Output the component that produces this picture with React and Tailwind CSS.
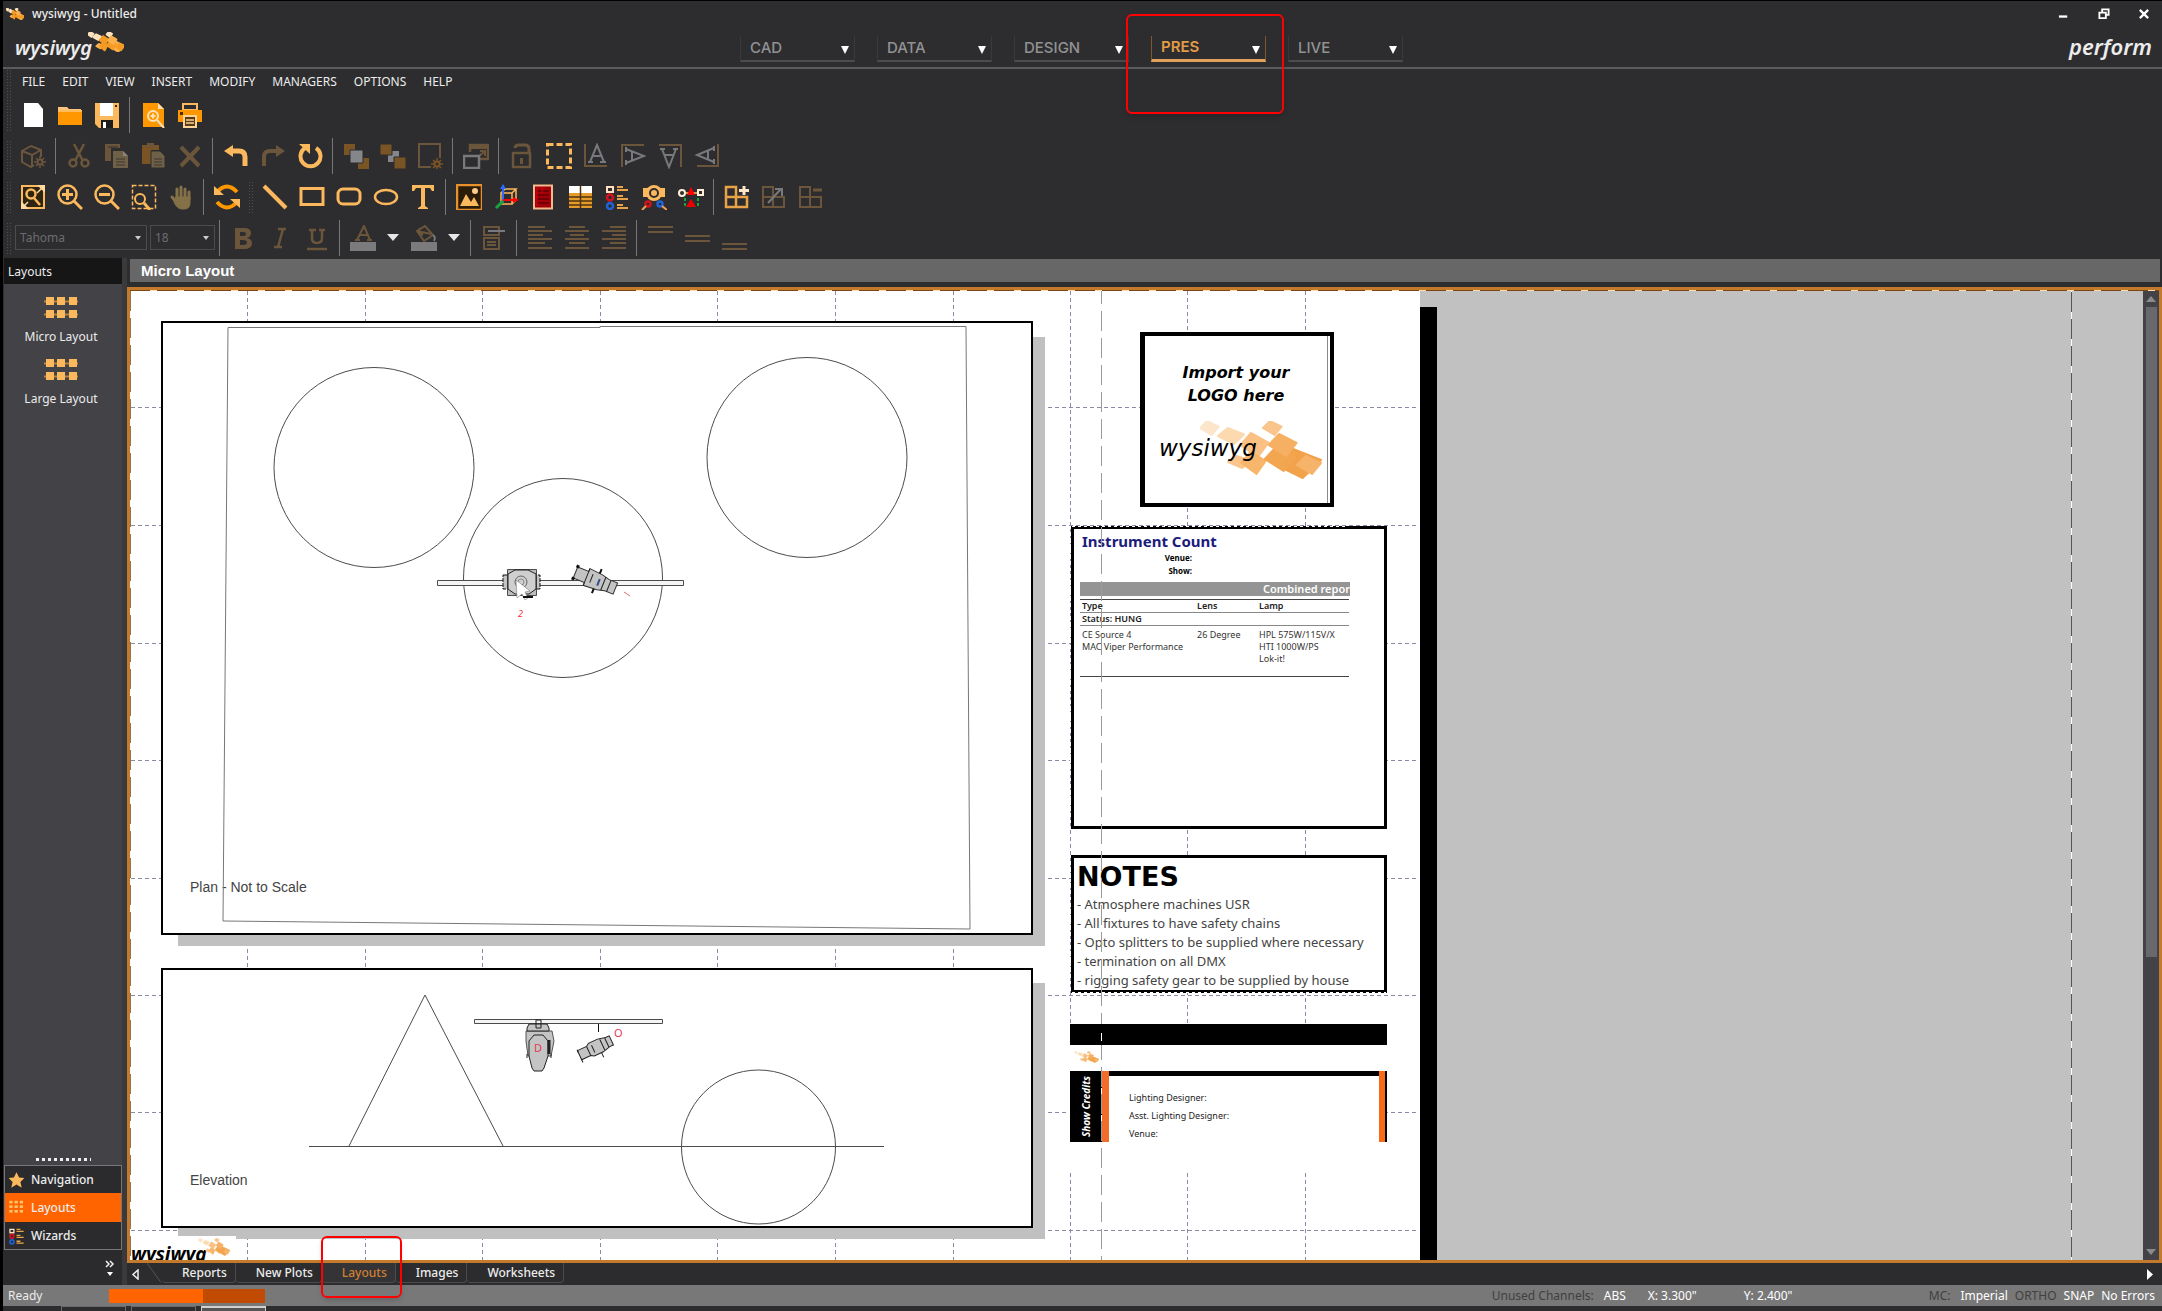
import React from "react";

const A = "#fbb85c";
const O = "#ff9800";
const D = "#6b563c";
const DO = "#7a5424";
const G = "#77797c";

const Svg = ({ children, size = 26 }) => (
  <svg width={size} height={size} viewBox="0 0 26 26" fill="none" aria-hidden="true">
    {children}
  </svg>
);

const icons = {
  new: <path d="M4 1h14l5 6v18H4z" fill="#fff" />,
  folder: (
    <>
      <path d="M1 5h9l2 2h12v4H1z" fill="#fcc47a" />
      <path d="M1 8h24v15H1z" fill={O} />
      <path d="M1 9h24" stroke="#fde0b4" />
    </>
  ),
  save: (
    <>
      <path d="M1 1h24v25H5l-4-4z" fill={A} />
      <path d="M6 1h13v13H6z" fill="#fff" />
      <path d="M7 18h12v8H7z" fill="#1c1c1c" />
      <path d="M9 20h3v6H9z" fill="#fff" />
      <path d="M21 3h2v2h-2z" fill="#3a2a10" />
    </>
  ),
  preview: (
    <>
      <path d="M3 1h15l6 6v18H3z" fill={O} />
      <path d="M18 1v6h6z" fill="#fde0b4" />
      <circle cx="13" cy="14" r="5" stroke="#ffe2b8" strokeWidth="2" />
      <path d="M17 18l7 8M13 11.500v5M10.500 14h5" stroke="#ffe2b8" strokeWidth="2" />
    </>
  ),
  print: (
    <>
      <path d="M6 2h14v6H6z" stroke={A} strokeWidth="2" />
      <path d="M1 8h24v12H1z" fill={O} />
      <path d="M3 10h3v3H3z" fill="#4a3010" />
      <path d="M7 14h12v11H7z" fill="#5a3a10" stroke="#fcd49a" strokeWidth="2" />
      <path d="M9 18h8M9 21h8" stroke="#fcd49a" strokeWidth="1.500" />
    </>
  ),
  cube: (
    <g stroke={D} strokeWidth="2">
      <path d="M14 22l-3 2-9-5V8l9-5 10 4v7M2 8l10 4 9-5M12 12v12" />
      <circle cx="20" cy="19" r="2.500" />
      <path d="M20 13v3M20 22v3M14 19h3M23 19h3M16 15l2 2M22 21l2 2M24 15l-2 2M18 21l-2 2" strokeWidth="1.500" />
    </g>
  ),
  cut: (
    <g stroke={D} strokeWidth="2.500">
      <path d="M8 1l9 17M18 1L9 18" />
      <circle cx="7" cy="20" r="3.500" />
      <circle cx="19" cy="20" r="3.500" />
    </g>
  ),
  copy: (
    <>
      <path d="M2 1h15v4H8v13H2z" fill={D} />
      <path d="M5 4h10" stroke="#2d2d2f" />
      <path d="M10 8h10l5 5v12H10z" fill="#6f6148" />
      <path d="M20 8v5h5z" fill="#8b8478" />
      <path d="M13 16h9M13 19h9M13 22h9" stroke="#3b3631" />
    </>
  ),
  paste: (
    <>
      <path d="M2 2h17v5h-8v14H2z" fill={DO} />
      <path d="M7 0h7v4H7z" fill={D} />
      <path d="M11 8h9l5 5v12H11z" fill="#6f6148" stroke="#2d2d2f" />
      <path d="M14 16h8M14 19h8M14 22h8" stroke="#3b3631" />
    </>
  ),
  del: <path d="M4 4l18 19M22 4L4 23" stroke={D} strokeWidth="4" />,
  undo: (
    <>
      <path d="M1 8l9-6v12z" fill={A} />
      <path d="M8 8h8q6 0 6 6v9" stroke={A} strokeWidth="5" />
    </>
  ),
  redo: (
    <>
      <path d="M25 8l-9-6v12z" fill={D} />
      <path d="M18 8h-8q-6 0-6 6v9" stroke={D} strokeWidth="4" />
    </>
  ),
  rotate: (
    <>
      <path d="M19 5a10 10 0 1 1-11 0" stroke={A} strokeWidth="4" />
      <path d="M2 1h11v10z" fill={A} />
    </>
  ),
  front: (
    <>
      <path d="M1 1h11v11H1zM15 15h11v11H15z" fill={DO} />
      <path d="M7 7h13v13H7z" fill="#85868a" stroke="#2d2d2f" />
    </>
  ),
  back: (
    <>
      <path d="M8 8h11v11H8z" fill="#85868a" />
      <path d="M0 1h12v11H0zM14 14h12v12H14z" fill={DO} stroke="#2d2d2f" />
    </>
  ),
  pageGear: (
    <>
      <path d="M14 24H2V1h21v14" stroke={D} strokeWidth="2" />
      <circle cx="20" cy="21" r="2.500" stroke={DO} strokeWidth="2" />
      <path d="M20 15v3M20 24v2M14 21h3M23 21h3M16 17l2 2M22 23l2 2M24 17l-2 2M18 23l-2 2" stroke={DO} strokeWidth="1.500" />
    </>
  ),
  group: (
    <>
      <path d="M7 9V2h18v14h-8" stroke={D} strokeWidth="2.500" />
      <path d="M7 4h18" stroke={D} strokeWidth="4" />
      <path d="M15 14l7-6M17 8h5v5" stroke={D} strokeWidth="2" />
      <path d="M1 13h15v12H1z" stroke={G} strokeWidth="2.500" />
    </>
  ),
  lock: (
    <>
      <path d="M6 5q0-3 4-3h6q4 0 4 4v5" stroke={D} strokeWidth="3" />
      <path d="M4 10h17v14H4z" stroke={D} strokeWidth="2.500" />
      <path d="M12.500 15v6" stroke={D} strokeWidth="3" />
    </>
  ),
  marquee: <path d="M1.500 1.500h23v23h-23z" stroke={A} strokeWidth="3" strokeDasharray="6 3" />,
  flipA: (
    <>
      <path d="M2 1v22h22" stroke={D} strokeWidth="2" />
      <path d="M7 19l7-17 7 17M9 13h9M5 19h5M17 19h6" stroke={G} strokeWidth="2" />
    </>
  ),
  flipB: (
    <>
      <path d="M24 2H2v22" stroke={D} strokeWidth="2" />
      <path d="M6 6l18 7-18 7M12 8v10M6 4v5M6 17v5" stroke={G} strokeWidth="2" />
    </>
  ),
  flipC: (
    <>
      <path d="M2 2h22v22" stroke={D} strokeWidth="2" />
      <path d="M5 6l7 18 7-18M7 12h10M3 6h5M16 6h5" stroke={G} strokeWidth="2" />
    </>
  ),
  flipD: (
    <>
      <path d="M24 1v22H3" stroke={D} strokeWidth="2" />
      <path d="M20 5L3 12l17 7M14 7v10M20 3v5M20 16v5" stroke={G} strokeWidth="2" />
    </>
  ),
  fit: (
    <>
      <path d="M2 2h22v22H2z" fill="#2d2412" stroke={A} strokeWidth="2" />
      <path d="M17 1h8v8z" fill="#ffd9a0" />
      <path d="M1 17v8h8z" fill="#ffd9a0" />
      <path d="M17 9l6-6M3 23l5-5" stroke="#ffd9a0" strokeWidth="1.500" />
      <circle cx="11" cy="10" r="4.500" stroke={A} strokeWidth="2.500" />
      <path d="M14 14l6 7" stroke={A} strokeWidth="2.500" />
    </>
  ),
  zoomIn: (
    <g stroke={A}>
      <circle cx="10.500" cy="10.500" r="9" strokeWidth="2.500" />
      <path d="M17 17l8 8M10.500 5v11M5 10.500h11" strokeWidth="3" />
    </g>
  ),
  zoomOut: (
    <g stroke={A}>
      <circle cx="10.500" cy="10.500" r="9" strokeWidth="2.500" />
      <path d="M17 17l8 8M5 10.500h11" strokeWidth="3" />
    </g>
  ),
  zoomWin: (
    <>
      <path d="M1.500 1.500h23v23h-23z" stroke={A} strokeWidth="1.500" strokeDasharray="4 2" />
      <circle cx="9" cy="15" r="5" fill="#2d2d2f" stroke={A} strokeWidth="2" />
      <path d="M13 19l6 7" stroke={A} strokeWidth="3" />
    </>
  ),
  hand: (
    <g stroke="#857148" strokeLinecap="round" strokeWidth="3">
      <path d="M9 14V5M13 14V3M17 14V5M21 15V8M4 13l5 6" />
      <path d="M8 13h14v6q0 6-6 6h-2q-5 0-8-7z" fill="#857148" strokeWidth="1" />
    </g>
  ),
  refresh: (
    <>
      <path d="M3 8q10-11 20 0M23 18q-10 11-20 0" stroke={O} strokeWidth="4" />
      <path d="M0 2v9h10zM26 24v-9H16z" fill={A} />
    </>
  ),
  line: <path d="M2 2l22 22" stroke={A} strokeWidth="4" />,
  rect: <path d="M2 4.500h22v16H2z" stroke={A} strokeWidth="3" />,
  rrect: <rect x="2" y="5" width="22" height="15" rx="5" stroke={A} strokeWidth="3" />,
  ellipse: <ellipse cx="13" cy="13" rx="11" ry="7" stroke={A} strokeWidth="2.500" />,
  text: <path d="M2 1h22v6h-2l-2-3h-5v18l3 2v1H8v-1l3-2V4H6L4 7H2z" fill={A} />,
  image: (
    <>
      <path d="M1 1h25v25H1z" fill="#2b1c08" stroke="#e8912c" strokeWidth="2.500" />
      <path d="M4 22l6-12 5 8 3-5 5 9z" fill={A} />
      <circle cx="19" cy="7" r="3" fill="#ffc987" />
    </>
  ),
  axes: (
    <>
      <path d="M8 9h11v11H8zM8 9l4-4h11l-4 4M19 20l4-4V5" stroke={A} strokeWidth="1.500" />
      <path d="M10 18V2" stroke="#2b6bff" strokeWidth="2" />
      <path d="M7 5l3-5 3 5z" fill="#2b6bff" />
      <path d="M10 16h12" stroke="#f00" strokeWidth="2" />
      <path d="M20 13l6 3-6 3z" fill="#f00" />
      <path d="M10 17l-7 7" stroke="#17a53a" strokeWidth="3" />
    </>
  ),
  report: (
    <>
      <path d="M4 1.500h18v23H4z" fill="#a30008" stroke="#f4b98c" strokeWidth="2" />
      <path d="M7 7h12M7 11h12M7 15h12M7 19h12" stroke="#3d0004" />
      <path d="M7 4v18M12 3v6" stroke="#e00010" />
    </>
  ),
  table: (
    <>
      <path d="M2 2h23v22H2z" fill="#e59a2c" />
      <path d="M2 2h23v7H2z" fill="#fff" />
      <path d="M13.500 2v22M2 13h23M2 17h23M2 21h23" stroke="#4d340c" strokeWidth="1.500" />
    </>
  ),
  legend: (
    <>
      <path d="M3 3h6v5H3z" stroke="#ffe0c0" strokeWidth="2" />
      <circle cx="6" cy="13.500" r="3" stroke="#d3121e" strokeWidth="2.500" />
      <circle cx="6" cy="22" r="3" stroke="#1e63d8" strokeWidth="2.500" />
      <path d="M13 3h6M13 6h11M13 12h6M13 15h11M13 21h6M13 24h11" stroke="#e8a347" strokeWidth="2" />
    </>
  ),
  fixture: (
    <>
      <path d="M2 4h22v9H2z" fill={A} />
      <circle cx="13" cy="9" r="8" fill={A} />
      <circle cx="13" cy="9" r="4" fill={A} stroke="#2d2d2f" strokeWidth="2" />
      <circle cx="7" cy="20" r="2.500" stroke="#d3121e" strokeWidth="2.500" />
      <circle cx="19" cy="20" r="2.500" stroke="#1e63d8" strokeWidth="2.500" />
      <path d="M5 22l-4 4M21 22l5 4" stroke="#f0a050" strokeWidth="2" />
    </>
  ),
  cable: (
    <>
      <path d="M7 9h12" stroke={A} strokeWidth="1.500" />
      <circle cx="4" cy="9" r="3" stroke="#fff0da" strokeWidth="2" />
      <path d="M20 6h5v5h-5z" stroke="#fff0da" strokeWidth="2" />
      <path d="M13 3l4 8H9z" fill="#f00" />
      <path d="M13 15l5 8H8z" fill="#e00" />
      <path d="M7 14v9M20 14v9" stroke="#17a53a" strokeWidth="2" strokeDasharray="3 2" />
    </>
  ),
  gridAdd: (
    <>
      <path d="M2 3h10v10H2zM2 13h10v10H2zM12 13h11v10H12z" stroke="#e8a347" strokeWidth="2.500" />
      <path d="M20 2v9M15 6.500h10" stroke="#ffe6c8" strokeWidth="3" />
    </>
  ),
  gridScale: (
    <>
      <path d="M2 3h10v10H2zM2 13h10v10H2zM12 13h11v10H12z" stroke={D} strokeWidth="2" />
      <path d="M7 19L20 5M14 5h7v7" stroke={G} strokeWidth="2" />
    </>
  ),
  gridRemove: (
    <>
      <path d="M2 3h10v10H2zM2 13h10v10H2zM12 13h11v10H12z" stroke={D} strokeWidth="2" />
      <path d="M15 6h9" stroke={D} strokeWidth="3" />
    </>
  ),
  bold: <path d="M5 3h9q7 0 7 5 0 4-4 5 5 1 5 5 0 6-8 6H5zM10 7v4h3q3 0 3-2t-3-2zM10 15v5h3q4 0 4-2.500T13 15z" fill={D} fillRule="evenodd" />,
  italic: <path d="M11 4h8M16 4l-5 18M7 22h8" stroke={D} strokeWidth="2.500" />,
  underline: (
    <>
      <path d="M5 5h7M15 5h6M8 5v8q0 5 5 5t5-5V5" stroke={D} strokeWidth="2.500" />
      <path d="M3 24h20" stroke={D} strokeWidth="2.500" />
    </>
  ),
  fontColor: (
    <>
      <path d="M7 15L14 1l6 14M10 10h8M5 15h5M17 15h5" stroke={D} strokeWidth="2" />
      <path d="M0 17h26v10H0z" fill="#7b7b7d" />
    </>
  ),
  fill: (
    <>
      <path d="M6 6l8-5 8 9-9 6zM9 3q-3 4 3 7M6 6l14 3" stroke={D} strokeWidth="2" />
      <path d="M22 10q3 2 1 6" stroke={G} strokeWidth="2" />
      <path d="M0 17h26v10H0z" fill="#7b7b7d" />
    </>
  ),
  props: (
    <g stroke={D} strokeWidth="2">
      <path d="M3 2h15v8H3zM3 13h15v11H3zM6 17h9M6 20h9" />
      <path d="M7 6h17" stroke={G} />
    </g>
  ),
  left: <path d="M1 2h17M1 6h24M1 10h15M1 14h24M1 18h17M1 23h24" stroke={D} strokeWidth="2" />,
  center: <path d="M5 2h16M1 6h24M6 10h14M1 14h24M5 18h16M1 23h24" stroke={D} strokeWidth="2" />,
  right: <path d="M9 2h16M1 6h24M11 10h14M1 14h24M9 18h16M1 23h24" stroke={D} strokeWidth="2" />,
  top: <path d="M1 2h25M1 7h25" stroke={D} strokeWidth="2" />,
  middle: <path d="M1 11h25M1 16h25" stroke={D} strokeWidth="2" />,
  bottom: <path d="M1 19h25M1 24h25" stroke={D} strokeWidth="2" />,
};

const Grip = () => (
  <span className="ml-[3px] mr-[2px] h-8 w-[6px] shrink-0 bg-[radial-gradient(#505053_1px,transparent_1px)] bg-[size:3px_3px]" />
);
const Sep = () => (
  <span className="flex w-[9px] shrink-0 justify-center">
    <span className="h-9 w-px bg-[#77777a]" />
  </span>
);
const Tool = ({ name, label }) => (
  <button type="button" aria-label={label || name} className="flex h-9 w-[37px] shrink-0 items-center justify-center">
    <Svg>{icons[name]}</Svg>
  </button>
);
const Drop = ({ label }) => (
  <button type="button" aria-label={label} className="flex h-9 w-6 shrink-0 items-center justify-center">
    <span className="border-x-[6px] border-t-[7px] border-x-transparent border-t-[#e6e6e6]" />
  </button>
);

const Toolbar = ({ items }) => (
  <div className="flex h-[41px] items-center" role="toolbar">
    <Grip />
    {items.map((it, i) => (it === "|" ? <Sep key={i} /> : it === ":" ? <Grip key={i} /> : <Tool key={i} name={it} />))}
  </div>
);

const diamonds = [
  [10, 7, 10, 7, "#fbe6cc"],
  [33, 15, 14, 8, "#fcd9ae"],
  [77, 7, 10, 7, "#f9c58c"],
  [58, 24, 15, 12, "#fbc184"],
  [42, 41, 12, 6, "#fbc58c"],
  [57, 42, 13, 11, "#f8b56c"],
  [103, 42, 26, 15, "#f2a24a"],
  [85, 38, 16, 12, "#f3a650"],
  [88, 24, 15, 11, "#f5b063"],
  [116, 44, 13, 9, "#f6b36a"],
];
const Flame = ({ className, vivid }) => (
  <svg className={className} viewBox="0 0 130 58" preserveAspectRatio="none" aria-hidden="true">
    {diamonds.map(([x, y, w, h, c], i) => {
      const fill = vivid ? (i < 3 ? "#fde3bd" : i % 2 ? "#f59a22" : "#fbb04e") : c;
      return (
        <path
          key={i}
          d={`M${x - w} ${y}L${x - w / 4} ${y - h}L${x + w} ${y - h / 5}L${x + w / 4} ${y + h}Z`}
          fill={fill}
          stroke={fill}
          strokeWidth={vivid ? 6 : 2}
          strokeLinejoin="round"
        />
      );
    })}
  </svg>
);

const modes = ["CAD", "DATA", "DESIGN", "PRES", "LIVE"];

const ModeTab = ({ name }) => {
  const on = name === "PRES";
  return (
    <div className="relative">
      <button
        type="button"
        className={
          "flex h-[26px] w-[115px] items-center justify-between border-x border-x-[#3a3a3c] pl-[9px] pr-[5px] font-['Inter',sans-serif] text-[15px] " +
          (on
            ? "border-b-[3px] border-x-[#80582c] border-b-[#e0a258] font-semibold text-[#e39b45]"
            : "border-b-2 border-b-[#4c4c4e] font-medium text-[#929294]")
        }
      >
        {name}
        <span className="mt-1 border-x-4 border-t-8 border-x-transparent border-t-white" />
      </button>
      {on && <span className="pointer-events-none absolute -left-[25px] -top-[22px] z-20 h-[100px] w-[158px] rounded-md border-2 border-[#f00] shadow-md" />}
    </div>
  );
};

const LayoutIcon = () => (
  <svg width="34" height="22" viewBox="0 0 34 22" aria-hidden="true">
    <path d="M0 4.500h34M0 17.500h34" stroke="#b98440" strokeWidth="2" />
    {[2, 13, 25].map((x) => [0, 13].map((y) => <rect key={x + "-" + y} x={x} y={y} width="8" height="8" fill={A} />))}
  </svg>
);

const Sidebar = () => (
  <aside className="flex w-[118px] shrink-0 flex-col">
    <h2 className="h-[26px] bg-[#161617] pl-1 text-[12px] leading-7">Layouts</h2>
    <div className="flex grow flex-col items-center bg-[#434247] pr-1 pt-[13px]">
      {["Micro Layout", "Large Layout"].map((t) => (
        <button key={t} type="button" className="flex h-[62px] flex-col items-center gap-2 text-[12px]">
          <LayoutIcon />
          <span className="leading-5">{t}</span>
        </button>
      ))}
    </div>
    <div className="flex h-3 items-center justify-center bg-[#434247]">
      <span className="h-[3px] w-[55px] bg-[linear-gradient(90deg,#eee_50%,transparent_50%)] bg-[size:6px_3px]" />
    </div>
    <nav className="flex flex-col border border-[#77777a]">
      {["Navigation", "Layouts", "Wizards"].map((t, i) => (
        <button
          key={t}
          type="button"
          className={"flex items-center gap-[6px] pl-[3px] text-[12px] font-medium " + (i === 1 ? "h-[29px] bg-[#ff6400]" : "h-[27px] bg-[#2b2b2d]")}
        >
          <svg width="17" height="18" viewBox="0 0 26 26" fill="none" aria-hidden="true">
            {i === 0 && <path d="M13 1l4 8 8 1-6 6 2 9-8-5-8 5 2-9-6-6 8-1z" fill={A} />}
            {i === 1 && [2, 10, 18].map((x) => [2, 9, 16].map((y) => <rect key={x + "" + y} x={x} y={y} width="5" height="4" fill="#ffc46e" />))}
            {i === 2 && icons.legend}
          </svg>
          {t}
        </button>
      ))}
    </nav>
    <div className="flex h-[35px] flex-col items-end justify-center gap-1 bg-[#2b2b2d] pr-[7px]">
      <svg width="10" height="8" viewBox="0 0 10 8" fill="none" aria-hidden="true">
        <path d="M1 1l3 3-3 3M5 1l3 3-3 3" stroke="#eee" strokeWidth="1.500" />
      </svg>
      <span className="mr-[2px] border-x-[3px] border-t-4 border-x-transparent border-t-white" />
    </div>
  </aside>
);

const vGrid = [247, 365, 482, 600, 717, 835, 953, 1070, 1187, 1305];
const hGrid = [407, 525, 643, 760, 878, 995, 1112, 1230];

const Drawing = () => (
  <svg className="absolute left-0 top-0 h-[969px] w-[2012px]" viewBox="131 291 2012 969" fill="none" aria-hidden="true">
    <g stroke="#4c4c4c" strokeWidth="1">
      <path d="M228 327.500H600V326.500H966L970 929L223 921Z" stroke="#777" />
      <circle cx="374" cy="467.500" r="100" />
      <circle cx="807" cy="457.500" r="100" />
      <circle cx="563" cy="578" r="99.500" />
      <path d="M437.500 580.500h246v5h-246z" fill="#f4f4f4" />
      <g>
        <path d="M503 575h37v14h-37z" fill="#c4c4c4" stroke="#111" strokeDasharray="4 1" />
        <path d="M507.500 569.500h29v26h-29z" fill="#bdbdbd" />
        <path d="M508 574l7-4h13l8 4v15l-7 5h-14l-7-5z" fill="#cfcfcf" stroke="#222" />
        <circle cx="521" cy="582" r="6" stroke="#666" />
        <circle cx="521" cy="582" r="3" stroke="#888" />
        <path d="M516 580l1 18 5-4 3 6 3-2-3-6 5-1z" fill="#fff" stroke="#666" strokeWidth=".5" />
        <path d="M523 597h10" stroke="#111" strokeWidth="2" />
      </g>
      <g transform="translate(594 580) rotate(22)">
        <path d="M-20-6h12v-3l14 1 8 2h9v12h-9l-8 2-14 1v-3h-12z" fill="#c4c4c4" stroke="#333" />
        <path d="M-8-9v18M-3-5v9M10-7v14M16-6v12" stroke="#222" />
        <path d="M3-8v-5M3 8v5" stroke="#111" strokeWidth="2" />
        <path d="M-20-8v3M-20 5v3" stroke="#111" strokeWidth="3" />
        <path d="M5-3v7" stroke="#35508c" strokeWidth="2" />
      </g>
      <path d="M624 592l6 4" stroke="#e06a6a" />
      <path d="M349 1146L425 995L503 1146" />
      <path d="M309 1146.500H884" />
      <circle cx="758.500" cy="1147" r="77" />
      <path d="M474.500 1019.500h188v4h-188z" fill="#f4f4f4" />
      <g fill="#c4c4c4" stroke="#222">
        <path d="M526 1031h26l2 10-3 15h-23l-2-15z" stroke="#555" />
        <path d="M529 1024h18l2 4v3h-22v-3z" />
        <path d="M536 1020h5v8h-5z" fill="none" />
        <path d="M529 1056v-15l5-6h9l5 6v15l-4 12-2 3h-8l-2-3z" />
        <path d="M527 1058v-4M551 1058v-4" />
        <path d="M549 1040v14" strokeWidth="3" />
      </g>
      <path d="M598.500 1024v8" stroke="#111" />
      <g transform="translate(595 1048) rotate(-25)" fill="#c4c4c4" stroke="#222">
        <path d="M-17-5h10l3-2h10l8 2h4v10h-4l-8 2h-10l-3-2h-10z" />
        <path d="M-7-5v10M-2-4v8M8-6v12M13-5v10M4 7v5M-17-6v3M-17 4v4" />
      </g>
    </g>
  </svg>
);

const Grid = () => (
  <svg className="absolute left-0 top-0 h-[969px] w-[1289px]" viewBox="131 291 1289 969" fill="none" aria-hidden="true">
    <g stroke="#8a8aa6" strokeDasharray="4 3">
      {vGrid.map((x) => (
        <path key={x} d={`M${x + 0.5} 291V1260`} />
      ))}
      {hGrid.map((y) => (
        <path key={y} d={`M131 ${y + 0.5}H1417`} />
      ))}
    </g>
  </svg>
);

const Margins = () => (
  <svg className="absolute left-0 top-0 h-[969px] w-[2012px]" viewBox="131 291 2012 969" fill="none" aria-hidden="true">
    <path d="M1101.500 284V1260" stroke="#9b9b9b" strokeDasharray="20 7" />
    <path d="M1101.500 1024v21" stroke="#000" />
    <path d="M1101.500 1033v8M1101.500 1088v6M1101.500 1115v6" stroke="#fff" />
    <path d="M2071.500 291V1260" stroke="#fff" />
    <path d="M2071.500 292V1260" stroke="#555" strokeDasharray="20 7" />
    <path d="M1070.500 526V829M1070.500 855V993" stroke="#fff" strokeDasharray="3 3" />
    <path d="M1072 526.500H1348M1072 992.500H1386" stroke="#fff" strokeDasharray="3 3" />
  </svg>
);

const notes = [
  "- Atmosphere machines USR",
  "- All fixtures to have safety chains",
  "- Opto splitters to be supplied where necessary",
  "- termination on all DMX",
  "- rigging safety gear to be supplied by house",
];

const Canvas = () => (
  <div className="relative grow overflow-hidden bg-[#c1c1c1] text-black">
    <div className="absolute left-0 top-0 h-full w-[1289px] bg-white" />
    <div className="absolute left-[1289px] top-4 h-full w-[17px] bg-black" />
    <Grid />

    <div className="absolute left-[47px] top-[46px] h-[609px] w-[867px] bg-[#c0c0c0]" />
    <section className="absolute left-[30px] top-[30px] flex h-[614px] w-[872px] items-end border-2 border-black bg-white pb-[38px] pl-[27px]">
      <p className="font-['Liberation_Sans',sans-serif] text-[14px] leading-4 text-[#444]">Plan - Not to Scale</p>
    </section>
    <div className="absolute left-[47px] top-[692px] h-[256px] w-[867px] bg-[#c0c0c0]" />
    <section className="absolute left-[30px] top-[677px] flex h-[260px] w-[872px] items-end border-2 border-black bg-white pb-[38px] pl-[27px]">
      <p className="font-['Liberation_Sans',sans-serif] text-[14px] leading-4 text-[#444]">Elevation</p>
    </section>
    <Drawing />
    <span className="absolute left-[387px] top-[317px] text-[9px] italic leading-3 text-[#e33]">2</span>
    <span className="absolute left-[403px] top-[749px] text-[11px] leading-4 text-[#e23b4e]">D</span>
    <span className="absolute left-[483px] top-[734px] text-[11px] leading-4 text-[#e23b4e]">O</span>

    <section className="absolute left-[1009px] top-[41px] h-[175px] w-[194px] border-4 border-l-[5px] border-black bg-white font-['DejaVu_Sans',sans-serif] italic">
      <div className="mr-[2px] h-full border-r border-[#888] pt-[25px] text-center text-[16px] font-bold leading-[23px]">
        Import your
        <br />
        LOGO here
      </div>
      <Flame className="absolute left-[55px] top-[85px] h-[58px] w-[122px]" />
      <p className="absolute left-[14px] top-[98px] text-[23px] leading-7">wysiwyg</p>
    </section>

    <section className="absolute left-[940px] top-[235px] h-[303px] w-[316px] border-[3px] border-black bg-white pl-[6px] pt-[4px] font-['Noto_Sans',sans-serif]">
      <h3 className="pl-[2px] text-[15px] font-bold leading-[16px] text-[#1c1c7c]">Instrument Count</h3>
      <div className="mt-[2px] w-[112px] text-right text-[8px] font-bold leading-[13px]">
        <p>Venue:</p>
        <p>Show:</p>
      </div>
      <div className="mt-[5px] h-[14px] w-[270px] whitespace-nowrap bg-[#949494] text-right text-[11px] font-semibold leading-[14px] text-white">
        Combined repor
      </div>
      <table className="mt-[3px] w-[269px] table-fixed border-collapse border-y border-[#444] text-left text-[9px] leading-[12px] text-[#333]">
        <colgroup>
          <col className="w-[117px]" />
          <col className="w-[62px]" />
          <col />
        </colgroup>
        <thead>
          <tr className="border-b border-[#888] text-[#222]">
            <th className="pl-[2px] font-semibold">Type</th>
            <th className="font-semibold">Lens</th>
            <th className="font-semibold">Lamp</th>
          </tr>
        </thead>
        <tbody>
          <tr className="border-b border-[#888]">
            <th colSpan="3" className="pl-[2px] font-semibold text-[#222]">
              Status: HUNG
            </th>
          </tr>
          <tr>
            <td className="pl-[2px] pt-[3px]">CE Source 4</td>
            <td className="pt-[3px]">26 Degree</td>
            <td className="pt-[3px]">HPL 575W/115V/X</td>
          </tr>
          <tr>
            <td className="whitespace-nowrap pb-[11px] pl-[2px] align-top">MAC Viper Performance</td>
            <td />
            <td className="pb-[11px]">
              HTI 1000W/PS
              <br />
              Lok-it!
            </td>
          </tr>
        </tbody>
      </table>
    </section>

    <section className="absolute left-[940px] top-[564px] h-[138px] w-[316px] border-[3px] border-black bg-white pl-[3px]">
      <h3 className="pt-[3px] font-['DejaVu_Sans',sans-serif] text-[27px] font-bold leading-[32px]">NOTES</h3>
      <ul className="pt-[2px] font-['Noto_Sans',sans-serif] text-[13px] leading-[19px] text-[#444]">
        {notes.map((n) => (
          <li key={n} className="whitespace-nowrap">
            {n}
          </li>
        ))}
      </ul>
    </section>

    <section className="absolute left-[938px] top-[733px] h-[146px] w-[318px] bg-white pl-px">
      <div className="h-[21px] bg-black" />
      <Flame className="ml-1 mt-[6px] h-[12px] w-[25px]" />
      <div className="mt-2 flex h-[71px]">
        <div className="flex w-8 items-center justify-center bg-black">
          <span className="rotate-180 text-[10px] font-bold italic leading-4 text-white [writing-mode:vertical-rl]">Show Credits</span>
        </div>
        <div className="w-[7px] bg-[#f26c2c]" />
        <div className="grow border-t-[5px] border-black pl-5 pt-[13px] font-['Noto_Sans',sans-serif] text-[9px] leading-[18px] text-[#222]">
          <p>Lighting Designer:</p>
          <p>Asst. Lighting Designer:</p>
          <p>Venue:</p>
        </div>
        <div className="w-2 border-r-2 border-black bg-[#f96a16]" />
      </div>
    </section>
    <Margins />

    <div className="absolute bottom-0 left-0 h-6 w-[105px] overflow-hidden bg-white">
      <p className="pt-[4px] text-[19px] font-bold italic leading-7">wysiwyg</p>
      <Flame className="absolute left-[67px] top-[2px] h-[18px] w-8" />
    </div>
  </div>
);

const sheetTabs = ["Reports", "New Plots", "Layouts", "Images", "Worksheets"];

const SheetTabs = () => (
  <div className="flex h-[22px] items-start bg-[#2c2c2e] text-[12px] font-medium">
    <button type="button" aria-label="Scroll tabs left" className="ml-1 flex h-[22px] w-4 items-center">
      <svg width="9" height="11" viewBox="0 0 9 11" fill="none" aria-hidden="true">
        <path d="M7 1v9L2 5.500z" stroke="#eee" strokeWidth="1.500" />
      </svg>
    </button>
    <svg width="15" height="20" viewBox="0 0 15 20" fill="none" aria-hidden="true" className="shrink-0">
      <path d="M0 0l14 19.500" stroke="#555" />
    </svg>
    <div className="flex" role="tablist">
      {sheetTabs.map((t) => {
        const on = t === "Layouts";
        return (
          <button
            key={t}
            type="button"
            role="tab"
            aria-selected={on}
            className={"relative h-5 rounded-b-[4px] border-b border-r border-[#4c4c4e] pl-5 pr-2 leading-4 " + (on ? "bg-[#343436] text-[#d07f33]" : "")}
          >
            {t}
            {on && <span className="pointer-events-none absolute -left-px -top-[27px] z-20 h-[62px] w-[81px] rounded-md border-2 border-[#f00] shadow-md" />}
          </button>
        );
      })}
    </div>
    <button type="button" aria-label="Scroll tabs right" className="ml-auto flex h-[22px] w-4 items-center">
      <svg width="8" height="11" viewBox="0 0 8 11" aria-hidden="true">
        <path d="M1 0v11l6-5.500z" fill="#fff" />
      </svg>
    </button>
  </div>
);

export default function App() {
  return (
    <div className="flex min-h-screen flex-col border-l-[3px] border-t border-black bg-[#2d2d2f] font-['Noto_Sans',sans-serif] text-[#ececec]">
      <header className="border-b-2 border-[#5c5c5e]">
        <div className="flex h-[25px] items-center justify-between">
          <div className="flex items-center gap-2 pl-[3px] text-[12px]">
            <Flame vivid className="h-3 w-[18px]" />
            <h1 className="font-medium">wysiwyg - Untitled</h1>
          </div>
          <div className="flex items-center pr-[6px]">
            <button type="button" aria-label="Minimize" className="flex w-10 justify-center">
              <Svg size={12}>
                <path d="M2 16h18v5H2z" fill="#fff" />
              </Svg>
            </button>
            <button type="button" aria-label="Restore" className="flex w-10 justify-center">
              <Svg size={12}>
                <path d="M9 8V3h14v12h-5M3 10h14v12H3z" stroke="#fff" strokeWidth="4" />
              </Svg>
            </button>
            <button type="button" aria-label="Close" className="-mr-2 flex w-10 justify-center">
              <Svg size={12}>
                <path d="M4 4l18 18M22 4L4 22" stroke="#fff" strokeWidth="5" />
              </Svg>
            </button>
          </div>
        </div>
        <div className="grid h-[41px] grid-cols-[737px_1fr_auto] items-start">
          <div className="flex pl-3">
            <span className="pt-[8px] text-[20px] font-semibold italic leading-7">wysiwyg</span>
            <Flame vivid className="-ml-1 mt-[6px] h-[20px] w-9" />
          </div>
          <nav className="flex gap-[22px] pt-[10px]">
            {modes.map((m) => (
              <ModeTab key={m} name={m} />
            ))}
          </nav>
          <span className="pr-[10px] pt-[6px] text-[22px] font-semibold italic leading-7">perform</span>
        </div>
      </header>

      <nav className="flex h-[25px] items-center">
        <Grip />
        <div className="flex gap-[17px] pl-2 text-[12px]">
          {["FILE", "EDIT", "VIEW", "INSERT", "MODIFY", "MANAGERS", "OPTIONS", "HELP"].map((m) => (
            <button key={m} type="button">
              {m}
            </button>
          ))}
        </div>
      </nav>
      <Toolbar items={["new", "folder", "save", "|", "preview", "print"]} />
      <Toolbar
        items={["cube", "|", "cut", "copy", "paste", "del", "|", "undo", "redo", "rotate", "|", "front", "back", "pageGear", "|", "group", "|", "lock", "marquee", "flipA", "flipB", "flipC", "flipD"]}
      />
      <Toolbar
        items={["fit", "zoomIn", "zoomOut", "zoomWin", "hand", "|", "refresh", ":", "line", "rect", "rrect", "ellipse", "text", "|", "image", "axes", "report", "table", "legend", "fixture", "cable", "|", "gridAdd", "gridScale", "gridRemove"]}
      />
      <div className="flex h-[41px] items-center" role="toolbar">
        <Grip />
        <div className="relative ml-px mr-[3px] flex items-center">
          <select aria-label="Font" className="h-[25px] w-[132px] appearance-none border border-[#4c4c4f] bg-transparent pl-1 text-[12px] text-[#6c6c6f]" defaultValue="Tahoma">
            <option>Tahoma</option>
          </select>
          <span className="pointer-events-none absolute right-[6px] border-x-[3px] border-t-4 border-x-transparent border-t-[#ccc]" />
        </div>
        <div className="relative flex items-center">
          <select aria-label="Font size" className="h-[25px] w-[65px] appearance-none border border-[#4c4c4f] bg-transparent pl-1 text-[12px] text-[#6c6c6f]" defaultValue="18">
            <option>18</option>
          </select>
          <span className="pointer-events-none absolute right-[6px] border-x-[3px] border-t-4 border-x-transparent border-t-[#ccc]" />
        </div>
        <Sep />
        <Tool name="bold" />
        <Tool name="italic" />
        <Tool name="underline" />
        <Sep />
        <Tool name="fontColor" label="Font color" />
        <Drop label="Font color options" />
        <Tool name="fill" label="Fill color" />
        <Drop label="Fill color options" />
        <Sep />
        <Tool name="props" />
        <Sep />
        <Tool name="left" />
        <Tool name="center" />
        <Tool name="right" />
        <Sep />
        <Tool name="top" />
        <Tool name="middle" />
        <Tool name="bottom" />
      </div>

      <div className="flex grow pl-px">
        <Sidebar />
        <main className="flex min-w-0 grow flex-col border-l-[5px] border-[#3a3a3d] pt-px">
          <h2 className="mb-[5px] ml-[3px] mr-[2px] h-[23px] bg-[#676767] pl-[11px] font-['Liberation_Sans',sans-serif] text-[15px] font-bold leading-[23px] text-white">
            Micro Layout
          </h2>
          <div className="flex grow flex-col border-[3px] border-[#c47a2c]">
            <div className="h-px bg-[repeating-linear-gradient(90deg,#7d4610_0_20px,#ffe2b0_20px_27px)]" />
            <div className="flex grow">
              <div className="w-px bg-[repeating-linear-gradient(180deg,#94734e_0_20px,#fff_20px_27px)]" />
              <Canvas />
              <div className="flex w-4 flex-col items-center bg-[#434247]">
                <span className="my-[5px] border-x-[5px] border-b-[6px] border-x-transparent border-b-[#8b8b8e]" />
                <span className="h-[650px] w-[11px] bg-[#69686d]" />
                <span className="mb-[5px] mt-auto border-x-[5px] border-t-[6px] border-x-transparent border-t-[#8b8b8e]" />
              </div>
            </div>
          </div>
          <SheetTabs />
        </main>
      </div>

      <footer>
        <div className="flex h-[21px] items-center bg-[#787878] text-[12px]">
          <span className="w-[106px] pl-[5px] pt-px">Ready</span>
          <div role="progressbar" aria-label="Progress" aria-valuenow="60" className="h-[14px] w-[156px] bg-[#c24b03]">
            <div className="h-full w-3/5 bg-[#ff6400]" />
          </div>
          <div className="ml-auto flex pr-[7px] pt-px text-white">
            <span className="mr-[10px] text-[#404040]">Unused Channels:</span>
            <span className="w-11">ABS</span>
            <span className="w-24">X: 3.300"</span>
            <span className="w-[185px]">Y: 2.400"</span>
            <span className="mr-[10px] text-[#404040]">MC:</span>
            <span className="mr-[7px]">Imperial</span>
            <span className="mr-[7px] text-[#404040]">ORTHO</span>
            <span className="mr-[7px]">SNAP</span>
            <span>No Errors</span>
          </div>
        </div>
        <div className="flex h-[5px] gap-[5px] pl-[58px]">
          <span className="w-[65px] border border-b-0 border-[#6a6a6c]" />
          <span className="w-[65px] border border-b-0 border-[#6a6a6c]" />
          <span className="w-[65px] border border-b-0 border-t-2 border-[#d0d0d0] bg-[#555]" />
        </div>
      </footer>
    </div>
  );
}
